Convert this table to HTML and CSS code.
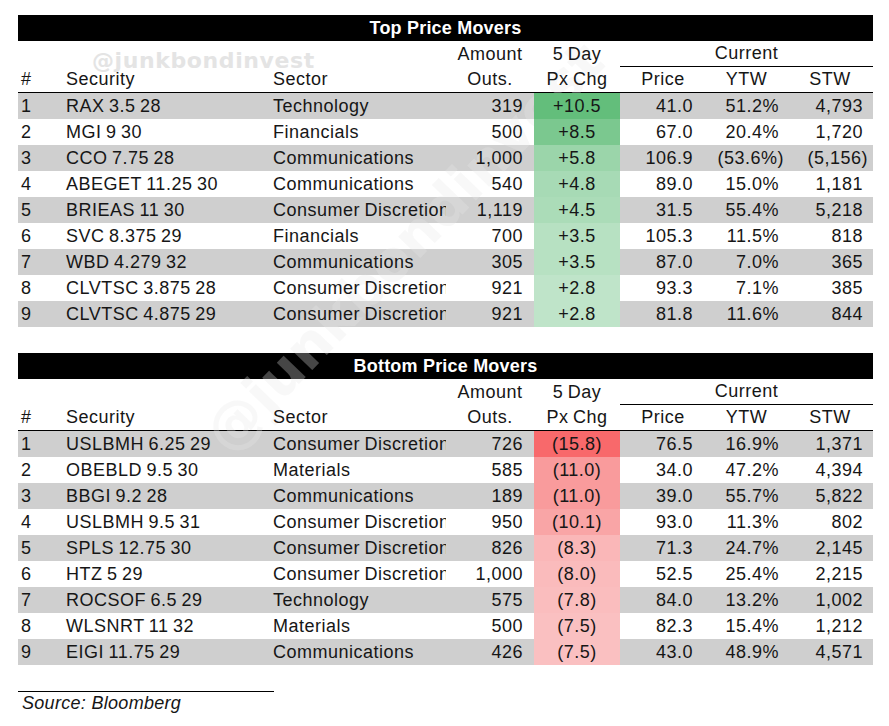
FILE: index.html
```html
<!DOCTYPE html>
<html lang="en">
<head>
<meta charset="utf-8">
<title>Top / Bottom Price Movers</title>
<link rel="stylesheet" href="styles.css">
</head>
<body>
<div class="page">
  <div class="wm-top">@junkbondinvest</div>
  <div class="wm-diag">@junkbondinvest</div>

  <section class="table">
    <div class="title">Top Price Movers</div>
    <div class="row hdr1">
      <div class="cell c amt-h">Amount</div>
      <div class="cell c px-h">5 Day</div>
      <div class="cell c current">Current</div>
    </div>
    <div class="row hdr2">
      <div class="cell l">#</div>
      <div class="cell l">Security</div>
      <div class="cell l">Sector</div>
      <div class="cell c">Outs.</div>
      <div class="cell c">Px Chg</div>
      <div class="cell c">Price</div>
      <div class="cell c">YTW</div>
      <div class="cell c">STW</div>
    </div>
    <div class="row alt"><div class="cell l">1</div><div class="cell l">RAX 3.5 28</div><div class="cell l">Technology</div><div class="cell r amt">319</div><div class="cell c px" style="background:#63be7b">+10.5</div><div class="cell r price">41.0</div><div class="cell r ytw">51.2%</div><div class="cell r stw">4,793</div></div>
    <div class="row"><div class="cell l">2</div><div class="cell l">MGI 9 30</div><div class="cell l">Financials</div><div class="cell r amt">500</div><div class="cell c px" style="background:#7bc88f">+8.5</div><div class="cell r price">67.0</div><div class="cell r ytw">20.4%</div><div class="cell r stw">1,720</div></div>
    <div class="row alt"><div class="cell l">3</div><div class="cell l">CCO 7.75 28</div><div class="cell l">Communications</div><div class="cell r amt">1,000</div><div class="cell c px" style="background:#9bd5aa">+5.8</div><div class="cell r price">106.9</div><div class="cell r ytw">(53.6%<span class="cp">)</span></div><div class="cell r stw">(5,156<span class="cp">)</span></div></div>
    <div class="row"><div class="cell l">4</div><div class="cell l">ABEGET 11.25 30</div><div class="cell l">Communications</div><div class="cell r amt">540</div><div class="cell c px" style="background:#a7dab5">+4.8</div><div class="cell r price">89.0</div><div class="cell r ytw">15.0%</div><div class="cell r stw">1,181</div></div>
    <div class="row alt"><div class="cell l">5</div><div class="cell l">BRIEAS 11 30</div><div class="cell l">Consumer Discretionary</div><div class="cell r amt">1,119</div><div class="cell c px" style="background:#abdcb8">+4.5</div><div class="cell r price">31.5</div><div class="cell r ytw">55.4%</div><div class="cell r stw">5,218</div></div>
    <div class="row"><div class="cell l">6</div><div class="cell l">SVC 8.375 29</div><div class="cell l">Financials</div><div class="cell r amt">700</div><div class="cell c px" style="background:#b7e1c2">+3.5</div><div class="cell r price">105.3</div><div class="cell r ytw">11.5%</div><div class="cell r stw">818</div></div>
    <div class="row alt"><div class="cell l">7</div><div class="cell l">WBD 4.279 32</div><div class="cell l">Communications</div><div class="cell r amt">305</div><div class="cell c px" style="background:#b7e1c2">+3.5</div><div class="cell r price">87.0</div><div class="cell r ytw">7.0%</div><div class="cell r stw">365</div></div>
    <div class="row"><div class="cell l">8</div><div class="cell l">CLVTSC 3.875 28</div><div class="cell l">Consumer Discretionary</div><div class="cell r amt">921</div><div class="cell c px" style="background:#bfe4c9">+2.8</div><div class="cell r price">93.3</div><div class="cell r ytw">7.1%</div><div class="cell r stw">385</div></div>
    <div class="row alt"><div class="cell l">9</div><div class="cell l">CLVTSC 4.875 29</div><div class="cell l">Consumer Discretionary</div><div class="cell r amt">921</div><div class="cell c px" style="background:#bfe4c9">+2.8</div><div class="cell r price">81.8</div><div class="cell r ytw">11.6%</div><div class="cell r stw">844</div></div>
  </section>

  <section class="table">
    <div class="title">Bottom Price Movers</div>
    <div class="row hdr1">
      <div class="cell c amt-h">Amount</div>
      <div class="cell c px-h">5 Day</div>
      <div class="cell c current">Current</div>
    </div>
    <div class="row hdr2">
      <div class="cell l">#</div>
      <div class="cell l">Security</div>
      <div class="cell l">Sector</div>
      <div class="cell c">Outs.</div>
      <div class="cell c">Px Chg</div>
      <div class="cell c">Price</div>
      <div class="cell c">YTW</div>
      <div class="cell c">STW</div>
    </div>
    <div class="row alt"><div class="cell l">1</div><div class="cell l">USLBMH 6.25 29</div><div class="cell l">Consumer Discretionary</div><div class="cell r amt">726</div><div class="cell c px" style="background:#f8696b">(15.8)</div><div class="cell r price">76.5</div><div class="cell r ytw">16.9%</div><div class="cell r stw">1,371</div></div>
    <div class="row"><div class="cell l">2</div><div class="cell l">OBEBLD 9.5 30</div><div class="cell l">Materials</div><div class="cell r amt">585</div><div class="cell c px" style="background:#f99b9c">(11.0)</div><div class="cell r price">34.0</div><div class="cell r ytw">47.2%</div><div class="cell r stw">4,394</div></div>
    <div class="row alt"><div class="cell l">3</div><div class="cell l">BBGI 9.2 28</div><div class="cell l">Communications</div><div class="cell r amt">189</div><div class="cell c px" style="background:#f99b9c">(11.0)</div><div class="cell r price">39.0</div><div class="cell r ytw">55.7%</div><div class="cell r stw">5,822</div></div>
    <div class="row"><div class="cell l">4</div><div class="cell l">USLBMH 9.5 31</div><div class="cell l">Consumer Discretionary</div><div class="cell r amt">950</div><div class="cell c px" style="background:#f9a5a6">(10.1)</div><div class="cell r price">93.0</div><div class="cell r ytw">11.3%</div><div class="cell r stw">802</div></div>
    <div class="row alt"><div class="cell l">5</div><div class="cell l">SPLS 12.75 30</div><div class="cell l">Consumer Discretionary</div><div class="cell r amt">826</div><div class="cell c px" style="background:#fab7b8">(8.3)</div><div class="cell r price">71.3</div><div class="cell r ytw">24.7%</div><div class="cell r stw">2,145</div></div>
    <div class="row"><div class="cell l">6</div><div class="cell l">HTZ 5 29</div><div class="cell l">Consumer Discretionary</div><div class="cell r amt">1,000</div><div class="cell c px" style="background:#fabbbc">(8.0)</div><div class="cell r price">52.5</div><div class="cell r ytw">25.4%</div><div class="cell r stw">2,215</div></div>
    <div class="row alt"><div class="cell l">7</div><div class="cell l">ROCSOF 6.5 29</div><div class="cell l">Technology</div><div class="cell r amt">575</div><div class="cell c px" style="background:#fabdbe">(7.8)</div><div class="cell r price">84.0</div><div class="cell r ytw">13.2%</div><div class="cell r stw">1,002</div></div>
    <div class="row"><div class="cell l">8</div><div class="cell l">WLSNRT 11 32</div><div class="cell l">Materials</div><div class="cell r amt">500</div><div class="cell c px" style="background:#fac0c1">(7.5)</div><div class="cell r price">82.3</div><div class="cell r ytw">15.4%</div><div class="cell r stw">1,212</div></div>
    <div class="row alt"><div class="cell l">9</div><div class="cell l">EIGI 11.75 29</div><div class="cell l">Communications</div><div class="cell r amt">426</div><div class="cell c px" style="background:#fac0c1">(7.5)</div><div class="cell r price">43.0</div><div class="cell r ytw">48.9%</div><div class="cell r stw">4,571</div></div>
  </section>

  <div class="source">Source: Bloomberg</div>
</div>
</body>
</html>
```

FILE: styles.css
```css
html, body {
  margin: 0;
  padding: 0;
  background: #ffffff;
}

body {
  font-family: "Liberation Sans", Arial, sans-serif;
  color: #161616;
}

.page {
  position: relative;
  width: 855px;
  margin-left: 18px;
  padding-top: 15px;
}

.table + .table {
  margin-top: 26px;
}

.title {
  height: 26px;
  background: #000000;
  color: #ffffff;
  font-weight: bold;
  font-size: 18px;
  line-height: 26px;
  text-align: center;
  letter-spacing: 0.2px;
}

.row {
  display: grid;
  grid-template-columns: 45px 207px 176px 88px 86px 86px 81px 86px;
  height: 26px;
  box-sizing: border-box;
  font-size: 18px;
  line-height: 26px;
  letter-spacing: 0.5px;
  word-spacing: -1px;
}

.row.alt {
  background: #cfcfcf;
}

.hdr2 {
  border-bottom: 1px solid #000000;
  line-height: 25px;
}

.cell {
  position: relative;
  z-index: 2;
  white-space: nowrap;
  overflow: hidden;
}

.l { padding-left: 3px; }
.r { text-align: right; }
.c { text-align: center; }

.amt-h { grid-column: 4; }
.px-h { grid-column: 5; }

.current {
  grid-column: 6 / 9;
  border-bottom: 1px solid #000000;
  line-height: 25px;
}

.amt { padding-right: 11px; }
.price { padding-right: 13px; }
.ytw { padding-right: 8px; overflow: visible; }
.stw { padding-right: 10px; overflow: visible; }

.cp {
  margin-right: -5px;
}

.px {
  overflow: visible;
}

.source {
  margin-top: 26px;
  width: 252px;
  border-top: 1px solid #000000;
  padding-left: 4px;
  font-size: 18px;
  line-height: 23px;
  font-style: italic;
  letter-spacing: 0.3px;
}

.wm-top {
  position: absolute;
  z-index: 1;
  left: 74px;
  top: 48px;
  font-family: "DejaVu Sans", sans-serif;
  font-weight: bold;
  font-size: 22px;
  letter-spacing: 0.6px;
  color: #e4e4e4;
  white-space: nowrap;
}

.wm-diag {
  position: absolute;
  z-index: 1;
  left: 386px;
  top: 247px;
  transform: translate(-50%, -50%) rotate(-46deg);
  font-family: "DejaVu Sans", sans-serif;
  font-weight: bold;
  font-size: 56px;
  color: rgba(232, 232, 232, 0.3);
  white-space: nowrap;
}
```
